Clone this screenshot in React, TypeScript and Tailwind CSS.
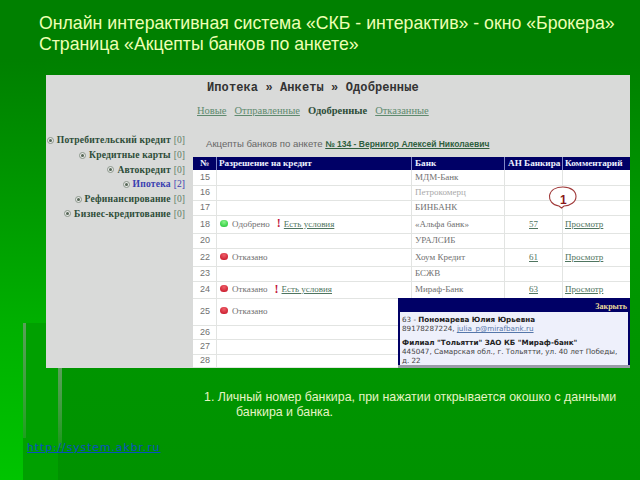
const rows = [
  { n: "15", h: "h-[16px]", bank: "МДМ-Банк" },
  { n: "16", h: "h-[15px]", bank: "Петрокомерц", faint: true },
  { n: "17", h: "h-[15px]", bank: "БИНБАНК" },
  { n: "18", h: "h-[18px]", st: "ok", cond: true, bank: "«Альфа банк»", an: "57", view: true },
  { n: "20", h: "h-[15px]", bank: "УРАЛСИБ" },
  { n: "22", h: "h-[18px]", st: "no", bank: "Хоум Кредит", an: "61", view: true },
  { n: "23", h: "h-[15px]", bank: "БСЖВ" },
  { n: "24", h: "h-[17px]", st: "no", cond: true, bank: "Мираф-Банк", an: "63", view: true },
  { n: "25", h: "h-[27px]", st: "no", bank: "" },
  { n: "26", h: "h-[14px]", bank: "" },
  { n: "27", h: "h-[15px]", bank: "" },
  { n: "28", h: "h-[13px]", bank: "" },
];

const side = [
  ["Потребительский кредит", "[0]", false],
  ["Кредитные карты", "[0]", false],
  ["Автокредит", "[0]", false],
  ["Ипотека", "[2]", true],
  ["Рефинансирование", "[0]", false],
  ["Бизнес-кредитование", "[0]", false],
] as const;

function Dot({ ok }: { ok: boolean }) {
  return (
    <span
      className={
        ok
          ? "w-[8px] h-[7px] -mt-[3px] rounded-full bg-[radial-gradient(circle_at_50%_30%,#8cf58c,#16c02c)] shrink-0"
          : "w-[8px] h-[7px] -mt-[3px] rounded-full bg-[radial-gradient(circle_at_50%_30%,#f0606a,#c00c20)] shrink-0"
      }
    />
  );
}

export default function App() {
  return (
    <div className="relative w-[640px] h-[480px] overflow-hidden bg-[linear-gradient(to_bottom,#008000_0%,#008000_12%,#009800_45%,#009200_100%)] font-['Liberation_Sans',sans-serif]">
      <div className="absolute left-0 top-[60px] w-[46px] h-[263px] bg-gradient-to-b from-[#008000] to-[#00b000]" />
      <div className="absolute left-0 top-[323px] w-[23px] h-[157px] bg-gradient-to-b from-[#00b000] to-[#00c400]" />
      <div className="absolute left-[23px] top-[323px] w-[35px] h-[157px] bg-[#00a000]" />
      <div className="absolute left-[23px] top-[323px] w-[3px] h-[115px] bg-gradient-to-b from-[#5a9f5a] to-[#1da01d]" />
      <div className="absolute left-[58px] top-[368px] w-[4px] h-[80px] bg-gradient-to-b from-[#5a9f5a] to-[#149814]" />

      <div className="absolute left-[39px] top-[13px] text-[17.7px] leading-[21px] text-[#eeffb4] whitespace-nowrap">
        <div>Онлайн интерактивная система «СКБ - интерактив» - окно «Брокера»</div>
        <div>Страница «Акцепты банков по анкете»</div>
      </div>

      <div className="absolute left-[46px] top-[75px] w-[584px] h-[293px] bg-[#d9dad9] flex">
        <aside className="w-[147px] pt-[58px] flex flex-col items-end font-['Liberation_Serif',serif] text-[9.6px] font-bold">
          {side.map(([t, c, active]) => (
            <div key={t} className="h-[14.7px] flex items-center gap-[3px] pr-[8px] whitespace-nowrap">
              <span className="w-[7px] h-[7px] rounded-full border border-[#8a968a] bg-[#e8e8e8] flex items-center justify-center">
                <span className="w-[3px] h-[3px] rounded-full bg-[#556655]" />
              </span>
              <span className={active ? "text-[#3a3fb0] tracking-[0.2px]" : "text-[#2d4d38] tracking-[0.2px]"}>{t}</span>
              <span className={active ? "font-normal text-[#3a3fb0]" : "font-normal text-[#5f7f68]"}>{c}</span>
            </div>
          ))}
        </aside>
        <main className="flex-1 flex flex-col">
          <div className="h-[82px] text-[#333]">
            <div className="h-[24px] pt-[6px] pl-[14px] font-['Liberation_Mono',monospace] text-[12px] font-bold leading-[14px] tracking-[0.1px] whitespace-nowrap">
              Ипотека » Анкеты » Одобренные
            </div>
            <div className="mt-[4px] pl-[4px] h-[16px] flex gap-[8px] font-['Liberation_Serif',serif] text-[10.5px] text-[#5f8a6f] whitespace-nowrap">
              <span className="underline">Новые</span>
              <span className="underline">Отправленные</span>
              <span className="font-bold text-[#2d4d38]">Одобренные</span>
              <span className="underline">Отказанные</span>
            </div>
            <div className="mt-[18px] pl-[13px] text-[9.6px] leading-[14px] text-[#666] whitespace-nowrap">
              Акцепты банков по анкете{" "}
              <span className="underline text-[8.5px] text-[#2f5f3f] font-semibold">№ 134 - Вернигор Алексей Николаевич</span>
            </div>
          </div>
          <div className="flex h-[13px] bg-[#000066] text-[#eef0ff] font-['Liberation_Serif',serif] text-[9.2px] font-bold leading-[13px] whitespace-nowrap">
            <div className="w-[24px] text-center border-r border-[#7f86c8]">№</div>
            <div className="w-[195px] pl-[2px] border-r border-[#7f86c8]">Разрешение на кредит</div>
            <div className="w-[93px] pl-[3px] border-r border-[#7f86c8]">Банк</div>
            <div className="w-[58px] pl-[3px] border-r border-[#7f86c8]">АН Банкира</div>
            <div className="flex-1 pl-[2px]">Комментарий</div>
          </div>
          {rows.map((r) => (
            <div key={r.n} className={`flex ${r.h} bg-white border-b border-[#e2e4e2] text-[9px] text-[#707070] font-['Liberation_Serif',serif] items-stretch whitespace-nowrap`}>
              <div className="w-[24px] pl-[7px] border-r border-[#e2e4e2] flex items-center font-['Liberation_Sans',sans-serif] text-[9px]">{r.n}</div>
              <div className="w-[195px] pl-[3px] border-r border-[#e2e4e2] flex items-center">
                {r.st && <Dot ok={r.st === "ok"} />}
                {r.st && <span className="ml-[4px]">{r.st === "ok" ? "Одобрено" : "Отказано"}</span>}
                {r.cond && <span className="ml-[7px] -mt-[3px] text-[12px] font-bold text-[#c2183c] leading-none">!</span>}
                {r.cond && <span className="ml-[3px] underline text-[#4f7560]">Есть условия</span>}
              </div>
              <div className={r.faint ? "w-[93px] pl-[3px] border-r border-[#e2e4e2] flex items-center text-[#aaa]" : "w-[93px] pl-[3px] border-r border-[#e2e4e2] flex items-center"}>{r.bank}</div>
              <div className="w-[58px] border-r border-[#e2e4e2] flex items-center justify-center underline text-[#4f7560]">{r.an}</div>
              <div className="flex-1 pl-[2px] flex items-center underline text-[#4f7560]">{r.view && "Просмотр"}</div>
            </div>
          ))}
        </main>
      </div>

      <svg className="absolute left-[547px] top-[185px]" width="32" height="25" viewBox="0 0 32 25">
        <path d="M12 21 C5 20 2 15 2.5 10.5 C3.5 5 9 2 16 2 C24 2 29 6 29 11.5 C29 17 23 21 17 21 L14.5 23 Z" fill="white" stroke="#a03a3a" strokeWidth="1.1" />
      </svg>
      <div className="absolute left-[560px] top-[193px] text-[12px] leading-[14px] font-bold text-[#8a1a1a]">1</div>

      <div className="absolute left-[398px] top-[298px] w-[232px] h-[70px] bg-[#9a9ca8] flex flex-col">
        <div className="h-[67px] bg-[#000066] px-[2px] pb-[2px] flex flex-col">
          <div className="h-[14px] text-right pt-[3px] pr-[1px] text-[8px] leading-[11px] font-bold text-[#e8dc9a] font-['Liberation_Serif',serif]">Закрыть</div>
          <div className="flex-1 bg-[#eef0fb] px-[2px] pt-[3px] text-[7.2px] leading-[9px] text-[#444] font-['DejaVu_Sans',sans-serif] whitespace-nowrap">
            <div>63 - <b className="text-[#222]">Пономарева Юлия Юрьевна</b></div>
            <div>89178287224, <span className="underline text-[#5577aa]">julia_p@mirafbank.ru</span></div>
            <div className="h-[5px]" />
            <div className="font-bold text-[#222]">Филиал "Тольятти" ЗАО КБ "Мираф-банк"</div>
            <div>445047, Самарская обл., г. Тольятти, ул. 40 лет Победы,</div>
            <div>д. 22</div>
          </div>
        </div>
      </div>

      <div className="absolute left-[204px] top-[390px] text-[12.4px] leading-[15px] text-[#e6f4c4] whitespace-nowrap">
        <div>1. Личный номер банкира, при нажатии открывается окошко с данными</div>
        <div className="pl-[32px]">банкира и банка.</div>
      </div>

      <div className="absolute left-[27px] top-[440px] text-[11px] leading-[16px] text-[#0a50c0] underline tracking-[0.85px] font-['DejaVu_Sans',sans-serif]">
        http://system.akbr.ru
      </div>
    </div>
  );
}
